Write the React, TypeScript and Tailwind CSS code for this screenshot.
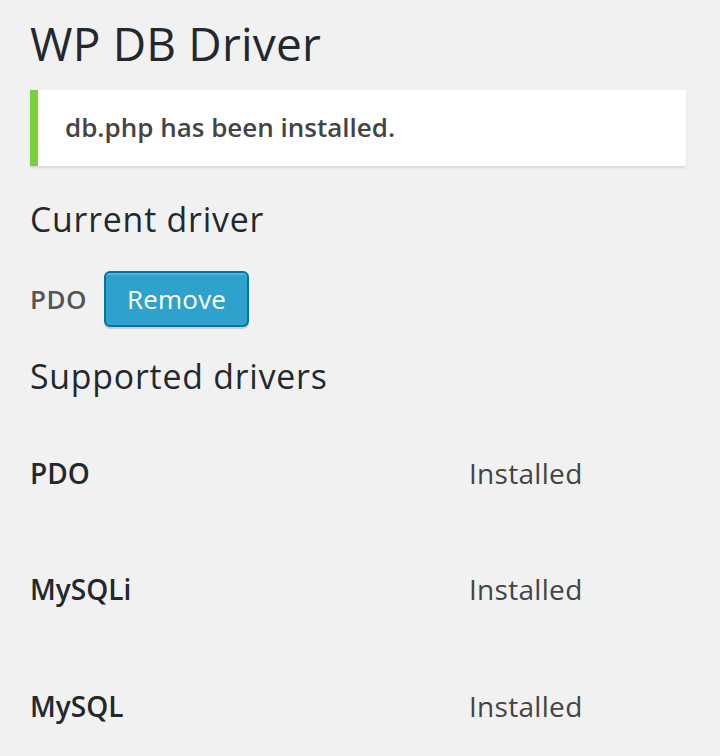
import React from "react";

const rows = ["PDO", "MySQLi", "MySQL"];

export default function App() {
  return (
    <div
      className="min-h-[756px] w-[720px] bg-[#f1f1f1] pl-[30px] pr-[34px] pt-[14px] text-[#444]"
      style={{ fontFamily: '"Open Sans", "Noto Sans", sans-serif' }}
    >
      <h1 className="text-[46px] font-normal leading-[58px] tracking-[0.2px] text-[#23282d]">WP DB Driver</h1>

      <div className="mt-[18px] flex w-[656px] border-l-[8px] border-[#7ad03a] bg-white pb-[20px] pl-[27px] pt-[18px] shadow-[0_2px_2px_0_rgba(0,0,0,0.1)]">
        <p className="text-[26px] font-semibold leading-[38px] text-[#444]">db.php has been installed.</p>
      </div>

      <h2 className="mt-[31px] text-[33.8px] font-normal leading-[44px] tracking-[0.8px] text-[#23282d]">Current driver</h2>

      <div className="mt-[30px] flex items-center">
        <span className="text-[26px] font-semibold leading-[56px] tracking-[0.5px] text-[#555]">PDO</span>
        <button className="ml-[17px] h-[56px] rounded-[6px] border-[2px] border-[#0074a2] bg-[#2ea2cc] px-[21px] pb-[2px] text-[26px] leading-[52px] tracking-[0.2px] text-white shadow-[inset_0_2px_0_rgba(120,200,230,0.5),0_2px_0_rgba(0,0,0,0.15)]">
          Remove
        </button>
      </div>

      <h2 className="mt-[27px] text-[33.8px] font-normal leading-[44px] tracking-[0.8px] text-[#23282d]">Supported drivers</h2>

      <div className="mt-[17px] flex flex-col">
        {rows.map((r) => (
          <div key={r} className="grid grid-cols-[439px_1fr] py-[40px] text-[28px] leading-[36.4px]">
            <div className="font-semibold text-[#23282d]">{r}</div>
            <div className="font-normal tracking-[0.3px] text-[#444]">Installed</div>
          </div>
        ))}
      </div>
    </div>
  );
}
